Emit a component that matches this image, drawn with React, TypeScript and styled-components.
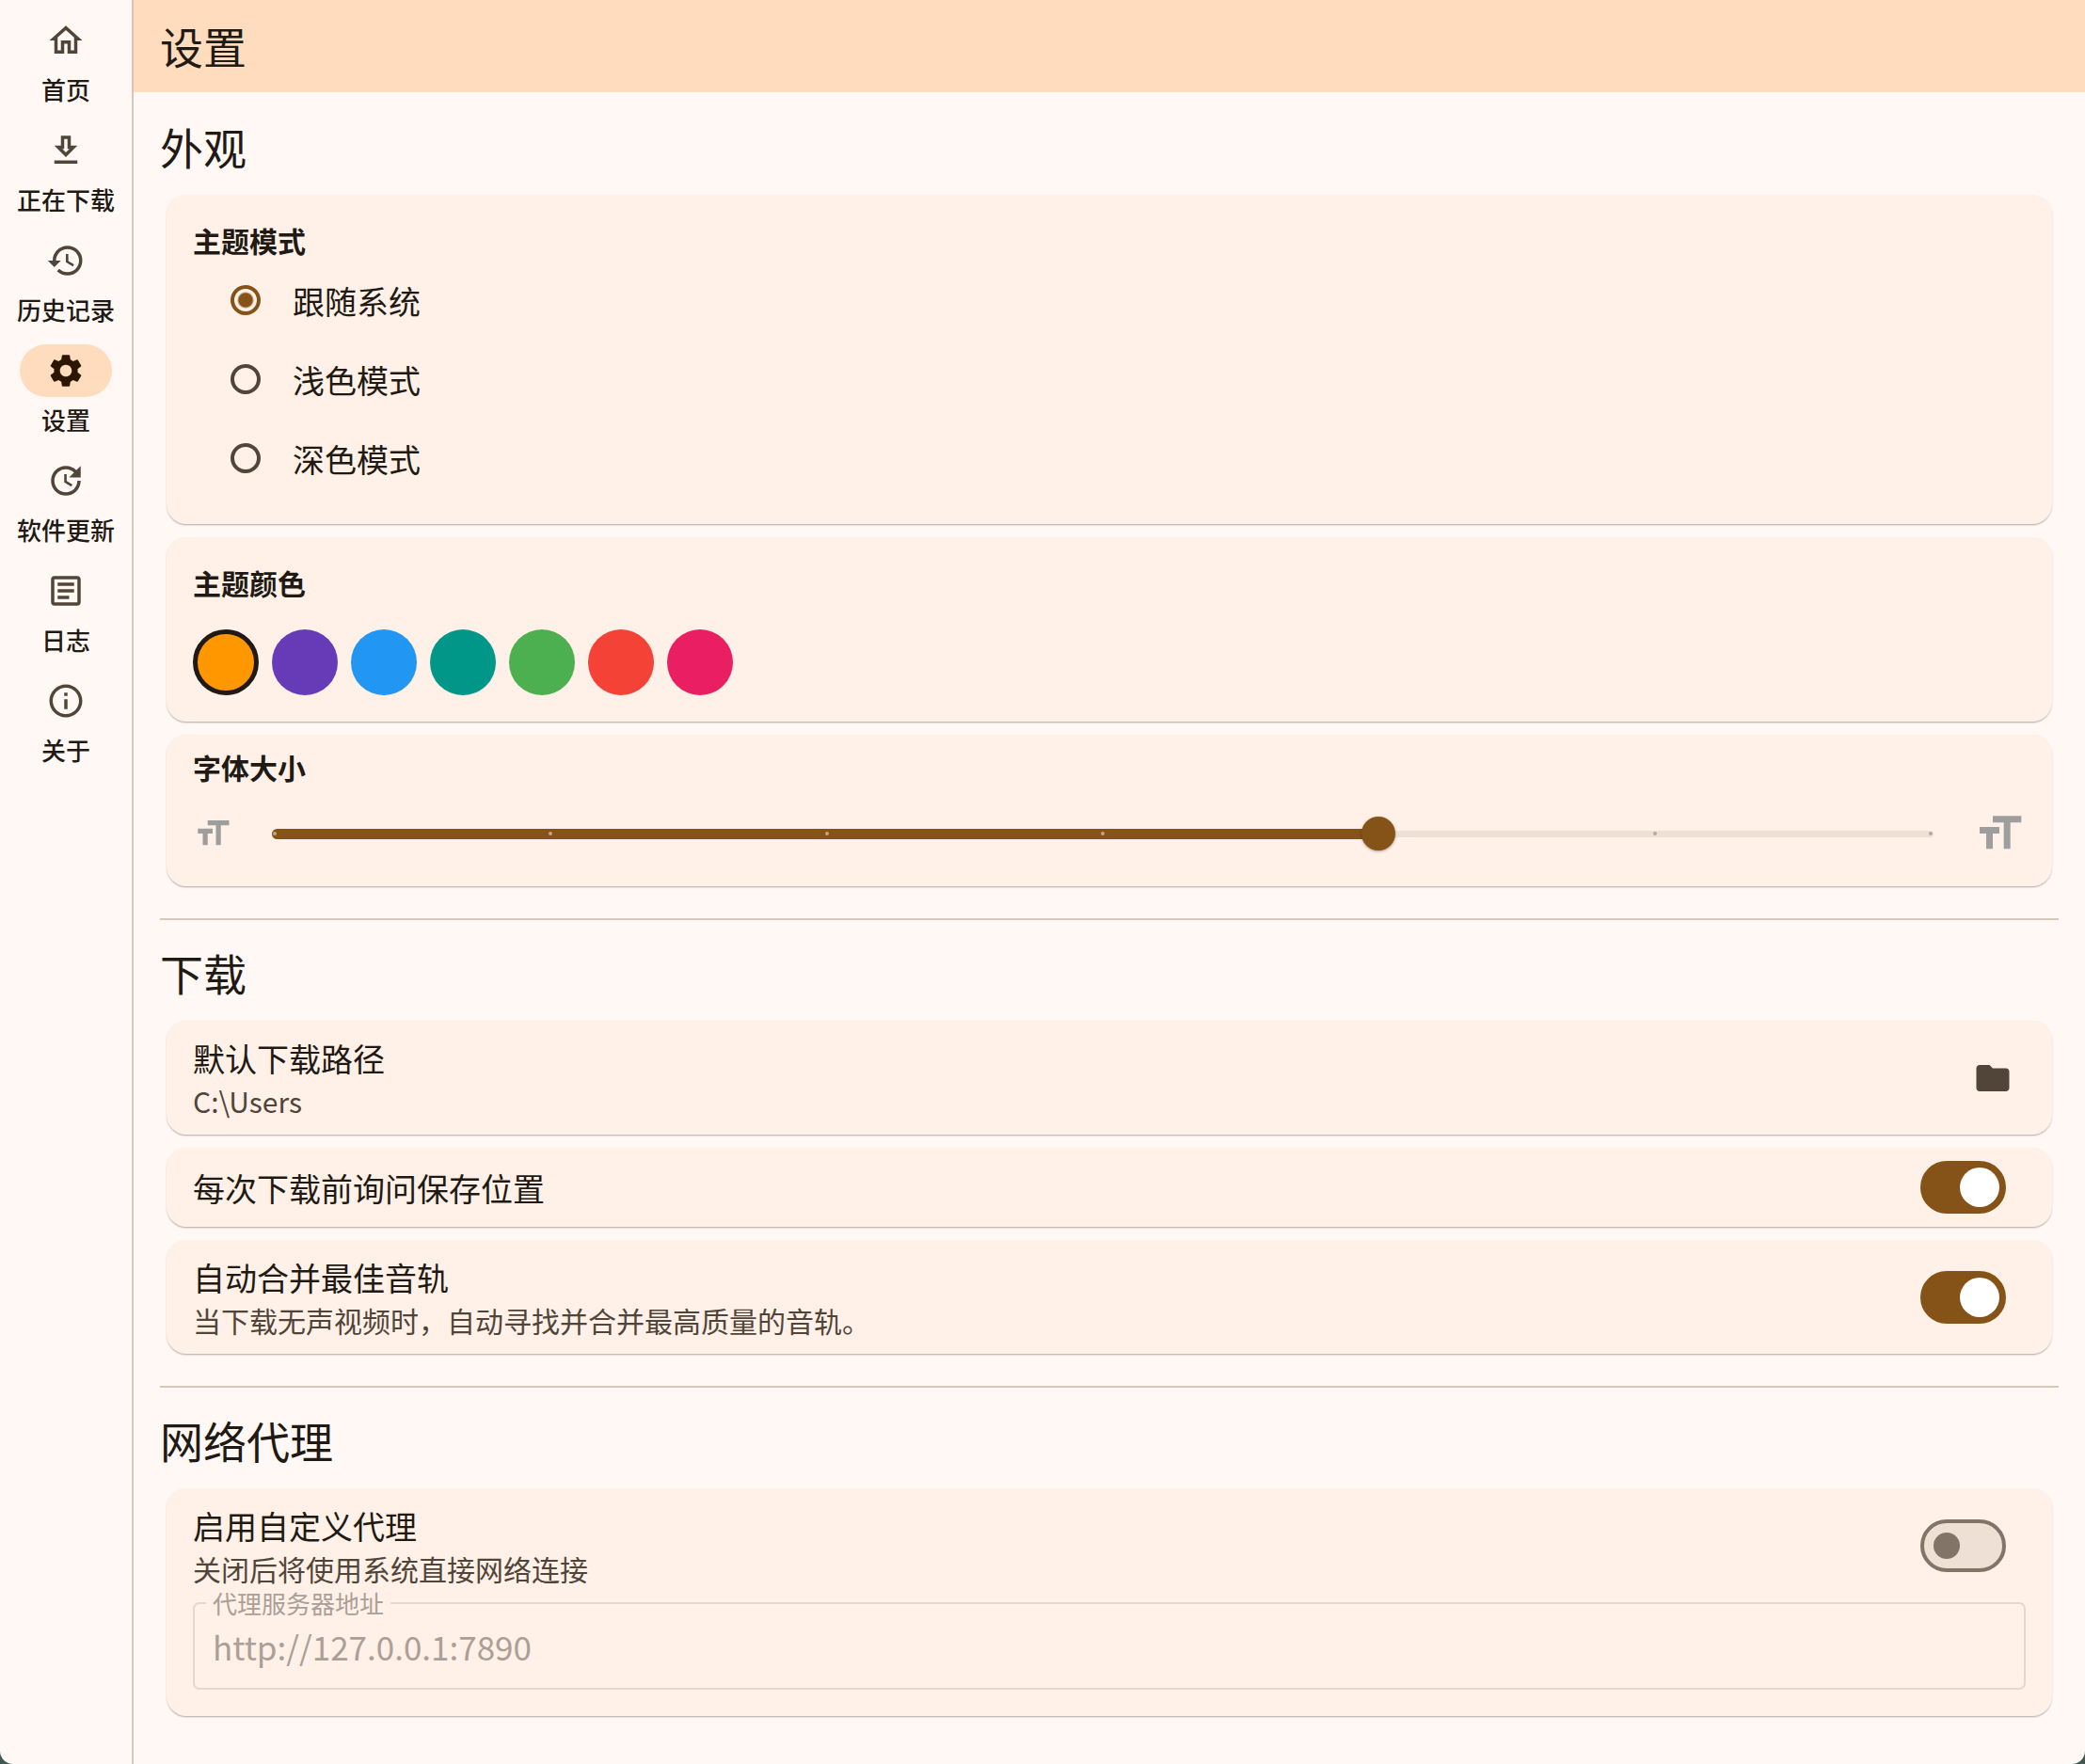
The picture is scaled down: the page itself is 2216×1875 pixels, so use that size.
import React, { useState } from "react";
import styled, { createGlobalStyle, css } from "styled-components";
import {
  MdFolder,
  MdFormatSize,
  MdHistory,
  MdOutlineArticle,
  MdOutlineHome,
  MdOutlineInfo,
  MdSettings,
} from "react-icons/md";

const color = {
  desktop: "#40584f",
  surface: "#fff8f5",
  card: "#fff1e7",
  accent: "#ffdcbe",
  primary: "#855317",
  onSurface: "#211a14",
  onSurfaceVariant: "#51453a",
  onAccent: "#2c1600",
  outline: "#837468",
  outlineVariant: "#d9c8ba",
  track: "#eee0d5",
  disabledText: "#ab9f97",
  disabledBorder: "#e4d7ce",
  muted: "#9e9e9e",
};

const GlobalStyle = createGlobalStyle`
  * { box-sizing: border-box; }
  html { background: ${color.desktop}; }
  body {
    margin: 0;
    color: ${color.onSurface};
    font-family: "Noto Sans CJK SC", sans-serif;
    font-weight: 400;
  }
  button, input { font: inherit; color: inherit; margin: 0; }
`;

const Window = styled.div`
  display: flex;
  min-height: 100vh;
  background: ${color.surface};
  border-radius: 0 0 14px 14px;
  overflow: hidden;
`;

const Rail = styled.nav`
  flex: none;
  width: 142px;
  padding: 15px 0;
  display: flex;
  flex-direction: column;
  gap: 17px;
  border-right: 2px solid ${color.outlineVariant};
`;

const RailItem = styled.button`
  display: flex;
  flex-direction: column;
  align-items: center;
  gap: 4px;
  padding: 0;
  border: 0;
  background: none;
  font-size: 26px;
  font-weight: 500;
  line-height: 40px;
  white-space: nowrap;
  cursor: pointer;
`;

const RailIcon = styled.span<{ $active: boolean }>`
  display: flex;
  align-items: center;
  justify-content: center;
  width: 98px;
  height: 56px;
  border-radius: 28px;
  font-size: 42px;
  color: ${(p) => (p.$active ? color.onAccent : color.onSurfaceVariant)};
  background: ${(p) => (p.$active ? color.accent : "transparent")};
`;

const Page = styled.div`
  flex: 1;
  min-width: 0;
`;

const TopBar = styled.header`
  display: flex;
  align-items: center;
  height: 98px;
  padding: 0 28px 2px;
  background: ${color.accent};
`;

const titleText = css`
  margin: 0;
  font-size: 46px;
  font-weight: 400;
  line-height: 58px;
`;

const PageTitle = styled.h1`
  ${titleText}
`;

const Content = styled.main`
  padding: 28px;
`;

const Section = styled.section`
  & + & {
    margin-top: 34px;
    padding-top: 26px;
    border-top: 2px solid ${color.outlineVariant};
  }
`;

const SectionTitle = styled.h2`
  ${titleText}
  margin-bottom: 23px;
`;

const CardList = styled.div`
  display: flex;
  flex-direction: column;
  gap: 14px;
  padding: 0 7px;
`;

const Card = styled.div<{ $pad?: string }>`
  padding: ${(p) => p.$pad ?? "0"};
  border-radius: 21px;
  background: ${color.card};
  box-shadow: 0 2px 2px -1px rgba(0, 0, 0, 0.2), 0 1px 2px rgba(0, 0, 0, 0.14);
`;

const CardTitle = styled.h3`
  margin: 0;
  padding-bottom: 2px;
  font-size: 30px;
  font-weight: 700;
  line-height: 40px;
`;

const RadioRow = styled.label`
  display: flex;
  align-items: center;
  gap: 34px;
  height: 84px;
  padding-left: 40px;
  font-size: 34px;
  line-height: 50px;
  cursor: pointer;
`;

const RadioText = styled.span`
  padding-top: 2px;
`;

const Radio = styled.input`
  appearance: none;
  flex: none;
  width: 32px;
  height: 32px;
  border: 4px solid ${color.onSurfaceVariant};
  border-radius: 50%;
  &:checked {
    border-color: ${color.primary};
    background: radial-gradient(circle, ${color.primary} 7px, transparent 9px);
  }
`;

const Swatches = styled.div`
  display: flex;
  flex-wrap: wrap;
  gap: 14px;
  margin-top: 28px;
`;

const Swatch = styled.button<{ $fill: string; $selected: boolean }>`
  width: 70px;
  height: 70px;
  padding: 0;
  border: ${(p) => (p.$selected ? `5px solid ${color.onSurface}` : "0")};
  border-radius: 50%;
  background: ${(p) => p.$fill};
  cursor: pointer;
`;

const SliderRow = styled.div`
  display: flex;
  align-items: center;
  height: 84px;
  margin-top: 7px;
  color: ${color.muted};
`;

const SizeIcon = styled(MdFormatSize)`
  flex: none;
`;

const SliderBox = styled.div`
  flex: 1;
  display: grid;
  align-items: center;
  margin: 0 27px;
  & > * {
    grid-area: 1 / 1;
  }
`;

const SliderTrack = styled.div`
  height: 7px;
  margin: 0 15px;
  border-radius: 4px;
  background: ${color.track};
`;

const SliderFill = styled.div`
  height: 11px;
  margin-left: 15px;
  border-radius: 6px;
  background: ${color.primary};
`;

const Ticks = styled.div`
  display: flex;
  justify-content: space-between;
  padding: 0 16px;
`;

const Tick = styled.span<{ $passed: boolean }>`
  width: 4px;
  height: 4px;
  border-radius: 50%;
  background: ${(p) => (p.$passed ? "#c3a586" : "#b5a89e")};
`;

const thumb = css`
  appearance: none;
  width: 36px;
  height: 36px;
  border: 0;
  border-radius: 50%;
  background: ${color.primary};
  box-shadow: 0 1px 3px rgba(0, 0, 0, 0.35);
`;

const Range = styled.input`
  appearance: none;
  width: 100%;
  height: 36px;
  background: transparent;
  cursor: pointer;
  &::-webkit-slider-thumb {
    ${thumb}
  }
  &::-moz-range-thumb {
    ${thumb}
  }
`;

const Tile = styled.div<{ $lines: 1 | 2 }>`
  display: flex;
  align-items: center;
  justify-content: space-between;
  min-height: ${(p) => (p.$lines === 2 ? 121 : 84)}px;
  padding: 0 42px 0 28px;
`;

const TileTitle = styled.label`
  display: block;
  font-size: 34px;
  line-height: 50px;
  &:only-child {
    padding-top: 2px;
  }
`;

const TileNote = styled.div`
  padding-bottom: 2px;
  font-size: 30px;
  line-height: 40px;
  color: ${color.onSurfaceVariant};
`;

const IconButton = styled.button`
  display: flex;
  padding: 0;
  border: 0;
  background: none;
  font-size: 42px;
  color: ${color.onSurfaceVariant};
  cursor: pointer;
`;

const Switch = styled.input`
  appearance: none;
  flex: none;
  display: flex;
  align-items: center;
  width: 91px;
  height: 56px;
  margin-right: 7px;
  padding: 0 10px;
  border: 4px solid ${color.outline};
  border-radius: 28px;
  background: ${color.track};
  cursor: pointer;
  &::before {
    content: "";
    width: 28px;
    height: 28px;
    border-radius: 50%;
    background: ${color.outline};
  }
  &:checked {
    justify-content: flex-end;
    padding: 0 3px;
    border-color: ${color.primary};
    background: ${color.primary};
  }
  &:checked::before {
    width: 42px;
    height: 42px;
    background: #fff;
  }
`;

const Field = styled.div`
  position: relative;
  margin: 0 28px;
`;

const FieldLabel = styled.label`
  position: absolute;
  top: -18px;
  left: 14px;
  padding: 0 7px;
  font-size: 26px;
  line-height: 38px;
  color: ${color.disabledText};
  background: ${color.card};
`;

const FieldInput = styled.input`
  display: block;
  width: 100%;
  height: 93px;
  padding: 0 19px;
  border: 2px solid ${color.disabledBorder};
  border-radius: 7px;
  background: transparent;
  font-size: 35px;
  &:disabled {
    color: ${color.disabledText};
  }
`;

const Glyph = ({ d }: { d: string }) => (
  <svg viewBox="0 0 24 24" width="1em" height="1em" fill="currentColor" aria-hidden="true">
    <path d={d} />
  </svg>
);

const DownloadIcon = () => (
  <Glyph d="M13 5v6h1.17L12 13.17 9.83 11H11V5h2m2-2H9v6H5l7 7 7-7h-4V3zm4 15H5v2h14v-2z" />
);

const UpdateIcon = () => (
  <Glyph d="M11 8v5l4.25 2.52.77-1.28-3.52-2.09V8H11zm10 2V3l-2.64 2.64A8.937 8.937 0 0 0 12 3a9 9 0 1 0 9 9h-2c0 3.86-3.14 7-7 7s-7-3.14-7-7 3.14-7 7-7c1.93 0 3.68.79 4.95 2.05L14 10h7z" />
);

const navItems = [
  { label: "首页", Icon: MdOutlineHome },
  { label: "正在下载", Icon: DownloadIcon },
  { label: "历史记录", Icon: MdHistory },
  { label: "设置", Icon: MdSettings },
  { label: "软件更新", Icon: UpdateIcon },
  { label: "日志", Icon: MdOutlineArticle },
  { label: "关于", Icon: MdOutlineInfo },
];

const modes = ["跟随系统", "浅色模式", "深色模式"];

const swatches = [
  { name: "橙色", fill: "#ff9800" },
  { name: "紫色", fill: "#673ab7" },
  { name: "蓝色", fill: "#2196f3" },
  { name: "青色", fill: "#009688" },
  { name: "绿色", fill: "#4caf50" },
  { name: "红色", fill: "#f44336" },
  { name: "粉色", fill: "#e91e63" },
];

const SIZE_STEPS = 6;

function FontSizeSlider() {
  const [size, setSize] = useState(4);
  return (
    <SliderRow>
      <SizeIcon size={42} />
      <SliderBox>
        <SliderTrack />
        <SliderFill style={{ width: `calc(3px + (100% - 36px) * ${size / SIZE_STEPS})` }} />
        <Ticks>
          {Array.from({ length: SIZE_STEPS + 1 }, (_, i) => (
            <Tick key={i} $passed={i <= size} />
          ))}
        </Ticks>
        <Range
          type="range"
          aria-labelledby="font-size-title"
          min={0}
          max={SIZE_STEPS}
          value={size}
          onChange={(e) => setSize(Number(e.target.value))}
        />
      </SliderBox>
      <SizeIcon size={56} />
    </SliderRow>
  );
}

function SwitchTile(props: {
  id: string;
  title: string;
  note?: string;
  checked: boolean;
  onChange: (value: boolean) => void;
}) {
  return (
    <Tile $lines={props.note ? 2 : 1}>
      <div>
        <TileTitle htmlFor={props.id}>{props.title}</TileTitle>
        {props.note && <TileNote>{props.note}</TileNote>}
      </div>
      <Switch
        id={props.id}
        type="checkbox"
        role="switch"
        checked={props.checked}
        onChange={(e) => props.onChange(e.target.checked)}
      />
    </Tile>
  );
}

export default function App() {
  const [page, setPage] = useState("设置");
  const [mode, setMode] = useState(modes[0]);
  const [theme, setTheme] = useState(swatches[0].name);
  const [askPath, setAskPath] = useState(true);
  const [mergeAudio, setMergeAudio] = useState(true);
  const [useProxy, setUseProxy] = useState(false);
  const [proxy, setProxy] = useState("http://127.0.0.1:7890");

  return (
    <>
      <GlobalStyle />
      <Window>
        <Rail>
          {navItems.map(({ label, Icon }) => (
            <RailItem key={label} type="button" onClick={() => setPage(label)}>
              <RailIcon $active={label === page}>
                <Icon />
              </RailIcon>
              {label}
            </RailItem>
          ))}
        </Rail>
        <Page>
          <TopBar>
            <PageTitle>设置</PageTitle>
          </TopBar>
          <Content>
            <Section>
              <SectionTitle>外观</SectionTitle>
              <CardList>
                <Card $pad="28px">
                  <CardTitle>主题模式</CardTitle>
                  {modes.map((m) => (
                    <RadioRow key={m}>
                      <Radio
                        type="radio"
                        name="mode"
                        checked={m === mode}
                        onChange={() => setMode(m)}
                      />
                      <RadioText>{m}</RadioText>
                    </RadioRow>
                  ))}
                </Card>
                <Card $pad="28px">
                  <CardTitle>主题颜色</CardTitle>
                  <Swatches>
                    {swatches.map((s) => (
                      <Swatch
                        key={s.name}
                        type="button"
                        aria-label={s.name}
                        $fill={s.fill}
                        $selected={s.name === theme}
                        onClick={() => setTheme(s.name)}
                      />
                    ))}
                  </Swatches>
                </Card>
                <Card $pad="14px 28px">
                  <CardTitle id="font-size-title">字体大小</CardTitle>
                  <FontSizeSlider />
                </Card>
              </CardList>
            </Section>
            <Section>
              <SectionTitle>下载</SectionTitle>
              <CardList>
                <Card>
                  <Tile $lines={2}>
                    <div>
                      <TileTitle as="div">默认下载路径</TileTitle>
                      <TileNote>C:\Users</TileNote>
                    </div>
                    <IconButton type="button" aria-label="选择文件夹">
                      <MdFolder />
                    </IconButton>
                  </Tile>
                </Card>
                <Card>
                  <SwitchTile
                    id="ask-path"
                    title="每次下载前询问保存位置"
                    checked={askPath}
                    onChange={setAskPath}
                  />
                </Card>
                <Card>
                  <SwitchTile
                    id="merge-audio"
                    title="自动合并最佳音轨"
                    note="当下载无声视频时，自动寻找并合并最高质量的音轨。"
                    checked={mergeAudio}
                    onChange={setMergeAudio}
                  />
                </Card>
              </CardList>
            </Section>
            <Section>
              <SectionTitle>网络代理</SectionTitle>
              <CardList>
                <Card $pad="0 0 28px">
                  <SwitchTile
                    id="use-proxy"
                    title="启用自定义代理"
                    note="关闭后将使用系统直接网络连接"
                    checked={useProxy}
                    onChange={setUseProxy}
                  />
                  <Field>
                    <FieldLabel htmlFor="proxy">代理服务器地址</FieldLabel>
                    <FieldInput
                      id="proxy"
                      type="text"
                      value={proxy}
                      disabled={!useProxy}
                      onChange={(e) => setProxy(e.target.value)}
                    />
                  </Field>
                </Card>
              </CardList>
            </Section>
          </Content>
        </Page>
      </Window>
    </>
  );
}
